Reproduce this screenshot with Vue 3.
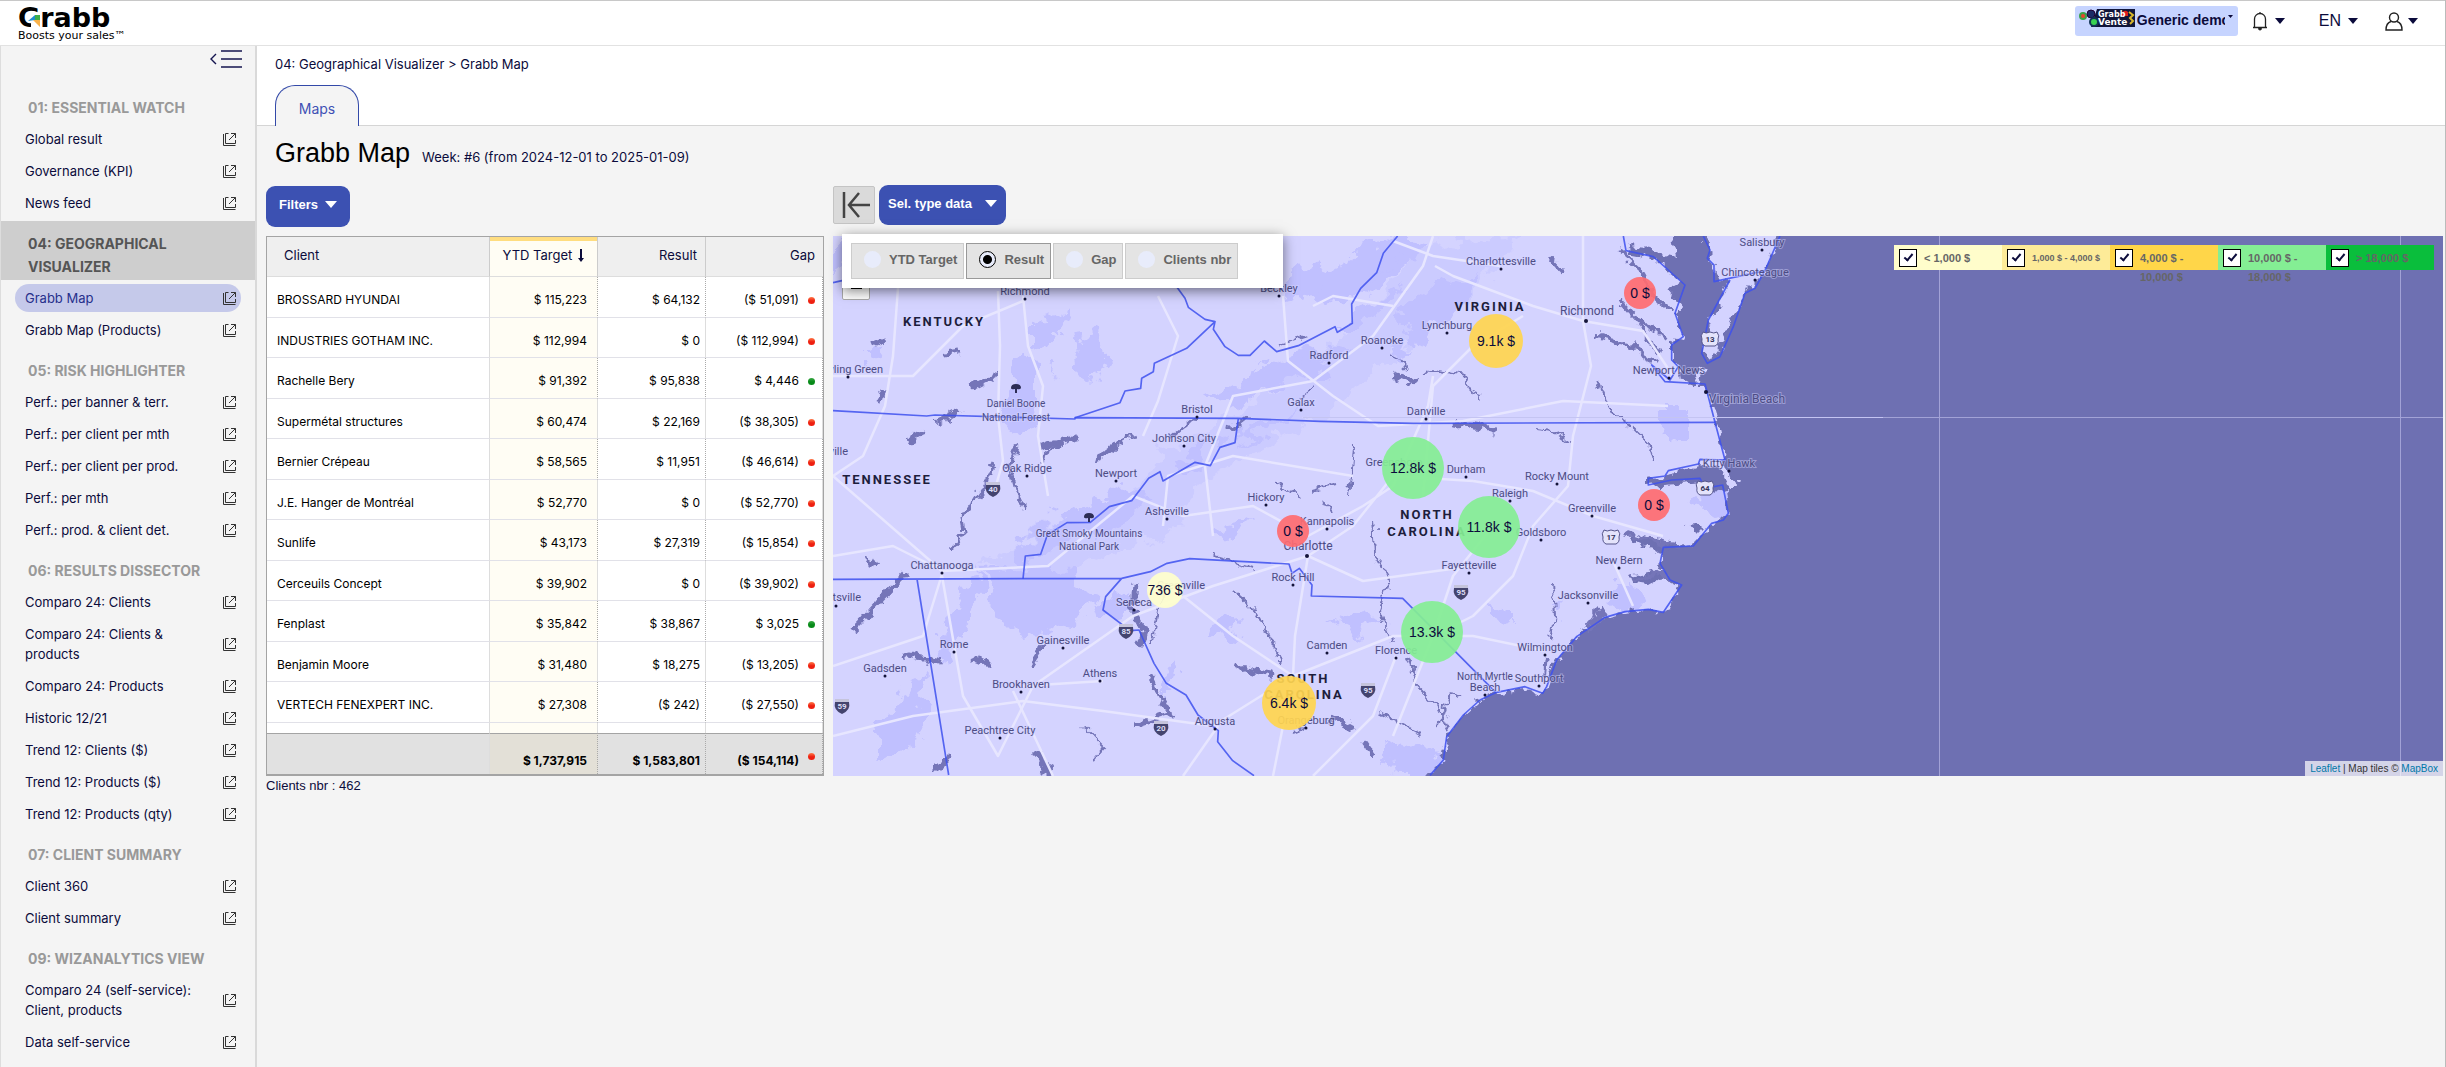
<script setup>
import { ref } from 'vue'

const menu = [
  { title: '01: ESSENTIAL WATCH', items: ['Global result', 'Governance (KPI)', 'News feed'] },
  { title: '04: GEOGRAPHICAL VISUALIZER', open: true, items: ['Grabb Map', 'Grabb Map (Products)'] },
  {
    title: '05: RISK HIGHLIGHTER',
    items: ['Perf.: per banner & terr.', 'Perf.: per client per mth', 'Perf.: per client per prod.', 'Perf.: per mth', 'Perf.: prod. & client det.'],
  },
  {
    title: '06: RESULTS DISSECTOR',
    items: ['Comparo 24: Clients', 'Comparo 24: Clients & products', 'Comparo 24: Products', 'Historic 12/21', 'Trend 12: Clients ($)', 'Trend 12: Products ($)', 'Trend 12: Products (qty)'],
  },
  { title: '07: CLIENT SUMMARY', items: ['Client 360', 'Client summary'] },
  { title: '09: WIZANALYTICS VIEW', items: ['Comparo 24 (self-service): Client, products', 'Data self-service'] },
]
const active = 'Grabb Map'

const rows = [
  ['BROSSARD HYUNDAI', '$ 115,223', '$ 64,132', '($ 51,091)'],
  ['INDUSTRIES GOTHAM INC.', '$ 112,994', '$ 0', '($ 112,994)'],
  ['Rachelle Bery', '$ 91,392', '$ 95,838', '$ 4,446'],
  ['Supermétal structures', '$ 60,474', '$ 22,169', '($ 38,305)'],
  ['Bernier Crépeau', '$ 58,565', '$ 11,951', '($ 46,614)'],
  ['J.E. Hanger de Montréal', '$ 52,770', '$ 0', '($ 52,770)'],
  ['Sunlife', '$ 43,173', '$ 27,319', '($ 15,854)'],
  ['Cerceuils Concept', '$ 39,902', '$ 0', '($ 39,902)'],
  ['Fenplast', '$ 35,842', '$ 38,867', '$ 3,025'],
  ['Benjamin Moore', '$ 31,480', '$ 18,275', '($ 13,205)'],
  ['VERTECH FENEXPERT INC.', '$ 27,308', '($ 242)', '($ 27,550)'],
]

const dataTypes = ['YTD Target', 'Result', 'Gap', 'Clients nbr']
const dataType = ref('Result')

const ranges = ref([
  { label: '< 1,000 $', color: '#fffdcb', on: true },
  { label: '1,000 $ - 4,000 $', color: '#fdeb98', on: true, small: true },
  { label: '4,000 $ - 10,000 $', color: '#ffd649', on: true },
  { label: '10,000 $ - 18,000 $', color: '#84ee94', on: true },
  { label: '> 18,000 $', color: '#0abe3c', on: true },
])

// x, y (centre of the name's baseline), name, park or two-line name without a dot
const towns = [
  [192, 59, 'Richmond'], [183, 171, 'Daniel Boone', 1], [183, 185, 'National Forest', 1],
  [364, 177, 'Bristol'], [351, 206, 'Johnson City'], [468, 170, 'Galax'], [194, 236, 'Oak Ridge'],
  [446, 56, 'Beckley'], [283, 241, 'Newport'], [334, 279, 'Asheville'], [433, 265, 'Hickory'],
  [494, 289, 'Kannapolis'], [256, 301, 'Great Smoky Mountains', 1], [256, 314, 'National Park', 1],
  [109, 333, 'Chattanooga'], [348, 353, 'Greenville'], [301, 370, 'Seneca'], [460, 345, 'Rock Hill'],
  [121, 412, 'Rome'], [230, 408, 'Gainesville'], [52, 436, 'Gadsden'], [267, 441, 'Athens'],
  [188, 452, 'Brookhaven'], [167, 498, 'Peachtree City'], [382, 489, 'Augusta'], [494, 413, 'Camden'],
  [473, 488, 'Orangeburg'], [668, 29, 'Charlottesville'], [929, 10, 'Salisbury'],
  [922, 40, 'Chincoteague'], [614, 93, 'Lynchburg'], [549, 108, 'Roanoke'], [496, 123, 'Radford'],
  [836, 138, 'Newport News'], [593, 179, 'Danville'], [561, 230, 'Greensboro'], [633, 237, 'Durham'],
  [724, 244, 'Rocky Mount'], [677, 261, 'Raleigh'], [759, 276, 'Greenville'], [896, 231, 'Kitty Hawk'],
  [708, 300, 'Goldsboro'], [636, 333, 'Fayetteville'], [786, 328, 'New Bern'], [755, 363, 'Jacksonville'],
  [712, 415, 'Wilmington'], [706, 446, 'Southport'], [652, 444, 'North Myrtle', 1], [652, 455, 'Beach'],
  [563, 418, 'Florence'],
]
const states = [
  [111, 90, 'KENTUCKY'], [54, 248, 'TENNESSEE'], [657, 75, 'VIRGINIA'], [594, 283, 'NORTH'],
  [594, 300, 'CAROLINA'], [470, 447, 'SOUTH'], [471, 463, 'CAROLINA'],
]
const interstates = [
  [160, 253, '40'], [293, 395, '85'], [9, 470, '59'], [328, 492, '20'], [535, 454, '95'], [628, 356, '95'],
]
const highways = [[877, 103, '13'], [872, 252, '64'], [778, 301, '17']]
const bubbles = [
  [663, 105, 27, '#ffd54f', '9.1k $'], [807, 57, 16, '#ff6b70', '0 $'], [580, 232, 31, '#84ee94', '12.8k $'],
  [656, 291, 31, '#84ee94', '11.8k $'], [821, 269, 16, '#ff6b70', '0 $'], [460, 295, 16, '#ff6b70', '0 $'],
  [332, 354, 18, '#ffffcc', '736 $'], [599, 396, 31, '#84ee94', '13.3k $'], [456, 467, 27, '#ffd54f', '6.4k $'],
]
</script>

<template>
  <div class="page">
    <header class="topbar">
      <a class="brand" href="#">
        <span class="brand-name">Grabb</span>
        <svg class="brand-mark" width="14" height="13" viewBox="0 0 14 13" aria-hidden="true">
          <path d="M0 0H14V13H4V8H0z" fill="#fff" />
          <path d="M1 7 8 1v5z" fill="#1f8fd0" />
          <path d="M8 1h5v5l-5 1z" fill="#3fae49" />
          <path d="M6 6h7v7z" fill="#f9b24a" />
        </svg>
        <span class="brand-line">Boosts your sales™</span>
      </a>
      <div class="tools">
        <div class="account">
          <svg width="56" height="18" viewBox="0 0 56 18" aria-hidden="true">
            <path d="M18 0H56V18H12z" fill="#10163a" />
            <circle cx="4" cy="7" r="3" fill="#e8452c" stroke="#3aa24a" stroke-width="2" />
            <circle cx="12" cy="5" r="4" fill="#1c2c66" stroke="#203" />
            <circle cx="15" cy="13" r="4" fill="#39d353" stroke="#135" stroke-width="2" />
            <path d="M41 7q4-8 8-4v4z" fill="#e11d1d" />
            <path d="M50 3l4 3-3 3 3 3-3 3" fill="none" stroke="#d8b72a" stroke-width="2" />
            <text x="19" y="8" class="thumb-a">Grabb</text>
            <text x="19" y="16" class="thumb-b">Vente</text>
          </svg>
          <select aria-label="Account"><option>Generic demo</option></select>
          <svg class="tiny" width="5" height="3" viewBox="0 0 5 3" aria-hidden="true"><path d="M0 0h5L2.500 3z" fill="#0b0b3b" /></svg>
        </div>
        <button class="tool" aria-label="Notifications">
          <svg width="16" height="20" viewBox="0 0 16 20" fill="none" stroke="#222" aria-hidden="true">
            <path d="M1 16.500h14M2.500 16.500V8a5.500 5.500 0 0 1 11 0v8.500M8 2.500V1" stroke-width="1.300" />
            <path d="M6.500 17.500a1.500 1.500 0 0 0 3 0z" fill="#222" />
          </svg>
          <i class="caret"></i>
        </button>
        <button class="tool lang">EN<i class="caret"></i></button>
        <button class="tool" aria-label="Profile">
          <svg width="18" height="19" viewBox="0 0 18 19" fill="none" stroke="#222" stroke-width="1.400" aria-hidden="true">
            <circle cx="9" cy="5.500" r="4.500" />
            <path d="M6 9.500Q1 11 1 18h16q0-7-5-8.500" />
          </svg>
          <i class="caret"></i>
        </button>
      </div>
    </header>

    <div class="body">
      <nav class="side">
        <button class="fold" aria-label="Collapse menu">
          <svg width="32" height="18" viewBox="0 0 32 18" fill="none" stroke="#14144f" stroke-width="1.400" aria-hidden="true">
            <path d="M6 4 1 9l5 5M11 1h21M11 9h21M11 17h21" />
          </svg>
        </button>
        <section v-for="g in menu" :key="g.title">
          <h2 :class="{ open: g.open }">{{ g.title }}</h2>
          <a v-for="i in g.items" :key="i" href="#" :class="{ on: i === active }">
            <span>{{ i }}</span>
            <svg width="13" height="13" viewBox="0 0 13 13" fill="none" stroke="#333" aria-hidden="true">
              <path d="M.500 1v11.500H12.500M5.500.500h-3v10h10V7M8 .500h4.500V5M12.500.500 6 7" />
            </svg>
          </a>
        </section>
      </nav>

      <main>
        <div class="crumbs">
          <p>04: Geographical Visualizer &gt; Grabb Map</p>
          <a class="tab" href="#">Maps</a>
        </div>
        <div class="title">
          <h1>Grabb Map</h1>
          <span>Week: #6 (from 2024-12-01 to 2025-01-09)</span>
        </div>
        <div class="panels">
          <div class="left">
            <div class="bar"><button class="primary">Filters<i class="caret"></i></button></div>
            <table>
              <colgroup><col class="c1" /><col class="c2" /><col class="c2" /><col /></colgroup>
              <thead>
                <tr>
                  <th>Client</th>
                  <th class="sorted">YTD Target
                    <svg width="6" height="13" viewBox="0 0 6 13" aria-hidden="true"><path d="M2 0h2v9h2l-3 4-3-4h2z" fill="#0b0b3b" /></svg>
                  </th>
                  <th>Result</th>
                  <th>Gap</th>
                </tr>
              </thead>
              <tbody>
                <tr v-for="r in rows" :key="r[0]">
                  <td>{{ r[0] }}</td>
                  <td>{{ r[1] }}</td>
                  <td>{{ r[2] }}</td>
                  <td>{{ r[3] }}<i class="dot" :class="{ up: r[3][0] === '$' }"></i></td>
                </tr>
                <tr class="rest"><td></td><td></td><td></td><td></td></tr>
              </tbody>
              <tfoot>
                <tr><td></td><td>$ 1,737,915</td><td>$ 1,583,801</td><td>($ 154,114)<i class="dot"></i></td></tr>
              </tfoot>
            </table>
            <p class="count">Clients nbr : 462</p>
          </div>

          <div class="right">
            <div class="bar">
              <button class="shrink" aria-label="Hide table">
                <svg width="28" height="26" viewBox="0 0 28 26" fill="none" stroke="#444" stroke-width="2.500" aria-hidden="true">
                  <path d="M2 0v26M28 13H7M17 1 7 13l10 12" />
                </svg>
              </button>
              <button class="primary wide">Sel. type data<i class="caret"></i></button>
              <div class="popup">
                <label v-for="d in dataTypes" :key="d" :class="{ on: d === dataType }">
                  <input v-model="dataType" type="radio" name="type" :value="d" />{{ d }}
                </label>
              </div>
            </div>
            <div class="map">
              <svg class="canvas" width="2400" height="540" viewBox="0 0 2400 540" role="img" aria-label="Map">
                <defs>
                  <filter id="rough" x="-40" y="-40" width="2480" height="640" filterUnits="userSpaceOnUse">
                    <feTurbulence type="fractalNoise" baseFrequency=".09" numOctaves="3" seed="4" />
                    <feDisplacementMap in="SourceGraphic" scale="14" xChannelSelector="R" yChannelSelector="G" />
                  </filter>
                  <filter id="rougher" x="-40" y="-40" width="2480" height="640" filterUnits="userSpaceOnUse">
                    <feTurbulence type="fractalNoise" baseFrequency=".05" numOctaves="4" seed="9" />
                    <feDisplacementMap in="SourceGraphic" scale="34" xChannelSelector="R" yChannelSelector="G" />
                  </filter>
                </defs>
                <rect width="2400" height="540" fill="#d4d3ff" />

                <!-- woodland -->
                <g filter="url(#rougher)" fill="#bcbcff" opacity=".8">
                  <path opacity=".45" d="M150 330 210 290 290 265 330 215 400 180 470 130 540 70 590 10 690 0 640 60 560 120 480 185 420 215 370 250 330 300 270 320 210 345z" />
                  <path d="M180 310 230 280 285 250 315 265 290 290 240 300 190 330z" />
                  <path d="M150 335 240 330 265 365 245 385 190 400 160 370zM372 160 440 130 480 110 520 115 460 140 400 170zM560 80 600 50 650 40 620 80 580 110zM470 55 505 30 560 0 600 5 560 40 500 70z" />
                  <path d="M200 85 235 75 225 100 200 105zM240 100 270 95 275 130 250 145zM175 150 190 120 205 130 205 175 185 200 165 175zM35 105 55 110 50 130 35 125z" />
                  <path d="M75 450 95 440 85 500 45 530 45 500zM325 440 345 430 340 455 325 455zM375 385 410 380 400 405 370 400zM495 385 525 375 550 385 520 400 500 395z" />
                  <path d="M555 510 590 505 610 525 600 540 560 540zM655 365 680 370 680 385 655 380zM780 345 800 345 810 370 790 375 775 365zM715 365 735 370 725 380zM830 170 850 170 850 205 835 205zM0 0 20 5 15 30 0 40zM450 40 490 30 480 60 455 65z" />
                  <path d="M105 395 125 360 150 330 130 400 110 430zM265 370 290 350 300 375 270 385zM420 285 400 305 380 295zM465 130 500 125 490 150 470 150zM860 255 900 250 910 280 880 285z" />
                  <path d="M392 150 430 125 425 135 395 158zM400 205 440 185 470 175 430 200zM505 90 560 55 575 50 530 90zM520 55 560 25 570 25 535 60zM345 225 395 195 385 210 350 240zM215 130 222 128 220 140zM560 118 575 112 570 125z" />
                </g>

                <!-- ocean, bays, rivers -->
                <g filter="url(#rough)" fill="#6e6fb2" stroke="none">
                  <path d="M839 -20 839 0 844 22 835 20 815 12 796 10 793 17 820 22 850 48 836 55 848 70 842 80 850 100 838 108 838 125 850 132 846 142 860 150 873 150 876 160 884 188 893 228 902 252 895 252 885 230 868 228 840 238 815 243 815 250 845 248 870 246 884 256 893 252 896 280 889 285 878 290 860 308 830 312 827 328 836 344 848 350 830 378 815 374 792 376 770 382 742 402 722 426 713 452 706 458 690 452 663 458 645 466 630 480 614 500 608 526 596 540 580 580 2430 580V-20z" />
                  <path d="M796 300 818 302 850 310 832 318 812 312zM798 340 824 334 832 340 815 350 800 348zM855 290 872 288 862 298z" />
                </g>
                <g filter="url(#rough)" fill="#d4d3ff">
                  <path d="M879 -20 872 8 882 16 874 24 881 32 884 46 896 44 884 72 873 98 872 120 876 126 886 112 899 84 914 54 932 36 944 0 944 -20z" />
                  <path d="M902 244h8l-3 5zM868 130l4 0-8 20-5 0z" />
                </g>
                <g filter="url(#rough)" fill="none" stroke="#7475b8" stroke-width="3">
                  <path d="M120 312l10-14-2-16 14-20 12-18 6-14M184 210l-8 20 6 25 8 18M206 225l18-14 12-8M275 215l28-17M340 200l22-18M395 195l20-15" />
                  <path stroke-width="6" d="M205 212l40-10M262 224l20-14M137 152l28-14M105 186l24-12M72 206l18-10M560 138l22 8M620 186l26 4 18 6" />
                  <path stroke-width="5" d="M20 395l30-34 22-24M70 418l38 8M198 430l14-22M143 422l14 6M32 322l12 6M38 110l14-6M110 118l16-2M50 152l-4 14M302 346l-2 28 12 22-4 14M316 440l22 38-36 12M405 432l34 6" />
                  <path stroke-width="7" d="M495 480l26 14M530 504l10 14M770 376l-18 20M205 518l14 26M100 538l16-16" />
                  <path stroke-width="4" d="M765 100l30 8 18 14 12 6M800 80l18 10 14 14M784 12l22 20 16 30 18 14M785 62l20 22 22 34M715 18l14 16M792 296l30 10 24 4M800 345l26-10 14 10M755 395l8-20M712 440l2-18" />
                  <path stroke-width="2" d="M700 192l20 2 20 14M560 120l14 12M592 135l40 6 16 24M765 145l12 30 20 16M820 225l-6-20-14-14M575 420l10 30 18 18 12 26M606 492l10-30 14-6M540 280l2 40 14 24-10 30 12 30M720 350l2 30-6 26M548 476l40 22M480 255l24-6M400 355l22 20 18 34 10 20M330 350l-12 60M380 320l40 12M490 265l8 12M250 490l20 20-12 14M425 30l8 26M445 108l30-10M468 160l10-8M440 245l30 20M520 210l-4 50M470 490l-10 4" />
                </g>

                <!-- roads -->
                <g fill="none" stroke="#e7e6ff" stroke-width="2.500" stroke-linejoin="round">
                  <path d="M65 52 60 120 52 170 30 220 0 240M165 55 167 110 165 180 170 225 160 260M190 60 195 110 210 150 205 200 215 260M0 140 80 140 130 90 190 65M325 60 345 100 325 165 310 200" />
                  <path d="M450 60 455 125 500 160 545 190 630 185 730 165 835 170M600 0 590 30 540 100 480 145 400 160 372 230 380 300" />
                  <path d="M602 30 620 40 700 70 750 85 810 95 840 140M750 0 750 85 758 130 740 200 735 250 700 290 680 340 640 380 600 400" />
                  <path d="M600 140 595 170 560 250 530 270 475 300 420 270 350 280 300 260 215 330 109 335 0 240M690 80 640 110 600 150 590 260M640 245 560 240 520 290 475 320 380 350 300 380 200 450 165 520 130 460 109 340" />
                  <path d="M475 320 462 400 460 440 440 540M350 360 400 400 460 440 560 400 640 400 712 415M0 500 80 480 190 465 270 475 380 490 460 440M270 445 190 450M180 455 220 540M563 420 540 480 480 540M385 490 350 540M660 290 620 340 600 400 560 500" />
                  <path d="M0 320 60 310 110 335 90 400 0 430M330 290 335 240 400 220 520 240M640 245 700 255 760 280 830 300M780 325 800 370M475 320 530 345 640 330M667 30 600 20 560 5M480 70 500 60 560 70" />
                </g>

                <!-- state limits -->
                <g fill="none" stroke="#3d50ee" stroke-width="5" stroke-opacity=".85" stroke-linejoin="round">
                  <g transform="translate(-13 -66) scale(.333333)">
                    <path d="M1070 350 1095 385 1105 412 1155 448 1185 455 1100 535 1003 580 1000 605 965 625 962 655 915 663 900 698 765 743M1185 455 1180 478 1215 530 1255 556 1290 556 1333 513 1370 545 1435 527 1545 470 1552 487 1597 460 1595 402 1622 355 1670 308 1690 250 1733 198" />
                    <path d="M39 338 66 332M39 722 320 738 345 735 765 747V743L1255 745 1500 754 1780 760 2685 757M1255 745 1245 818 1200 832 1171 887 1125 877 1029 933 1020 905 986 925 935 992 868 1010 811 1057 741 1058 682 1095 662 1153 616 1158 609 1227" />
                    <path d="M39 1228 905 1225 991 1205 1041 1180 1109 1166 1407 1182 1416 1210 1438 1195 1476 1245 1474 1278 1748 1285 2028 1568M905 1225 857 1280 849 1320 930 1382 957 1380 1002 1480 1039 1540 1098 1575 1134 1635 1195 1682 1193 1715 1238 1772 1302 1817M291 1227 386 1815" />
                  </g>
                  <g transform="translate(467 -6) scale(.333333)">
                    <path d="M970 18 978 62 1060 80 1155 165 1125 250 1150 320 1115 345V390L1135 410 1110 450 1055 405 1095 455 1215 462 1245 577 1275 690 1200 688 1195 702 1105 722 1095 738 1045 745V765L1115 750 1200 745 1215 775 1268 765 1285 850 1270 870 1235 880 1180 948 1090 952 1080 1000 1110 1050 1145 1065 1090 1147 1045 1138 975 1145 915 1162 830 1220 770 1290 740 1370 728 1390 675 1370 590 1387 540 1410 490 1455 440 1520 430 1590 390 1636" />
                    <path d="M1210 18 1230 60 1222 85 1242 105V155L1395 122 1440 18M1395 122 1365 175 1335 190 1300 290 1260 380 1222 400 1205 370 1225 270 1290 150" />
                  </g>
                </g>

                <!-- tile seams -->
                <path d="M1106.500 0v540M1567.500 0v540M1050 181.500h1400" stroke="#a2a2d6" fill="none" />
                <path d="M470 181.500h580" stroke="#c4c4f2" fill="none" />

                <g class="names">
                  <template v-for="t in towns" :key="t[0] + t[2]">
                    <text :x="t[0]" :y="t[1]" :class="{ fine: t[3] }">{{ t[2] }}</text>
                    <circle v-if="!t[3]" :cx="t[0]" :cy="t[1] + 4" r="1.500" />
                  </template>
                  <text x="50" y="137" class="end">Bowling Green</text>
                  <circle cx="15" cy="141" r="1.500" />
                  <text x="15" y="219" class="end">Nashville</text>
                  <text x="28" y="365" class="end">Huntsville</text>
                  <circle cx="3" cy="370" r="1.500" />
                  <g class="big">
                    <text x="754" y="79">Richmond</text><circle cx="753" cy="85" r="2" />
                    <text x="475" y="314">Charlotte</text><circle cx="474" cy="320" r="2" />
                    <text x="914" y="167">Virginia Beach</text><circle cx="873" cy="156" r="2" />
                  </g>
                </g>
                <g class="states"><text v-for="s in states" :key="s[2] + s[1]" :x="s[0]" :y="s[1]">{{ s[2] }}</text></g>
                <g fill="#2c2c55">
                  <path d="M178 152q0-4 5-4t5 4q-1 2-4 1v4h-2v-4q-4 1-4-1zM251 281q0-4 5-4t5 4q-1 2-4 1v4h-2v-4q-4 1-4-1z" />
                </g>
                <g v-for="s in interstates" :key="s[0]" :transform="`translate(${s[0]} ${s[1]})`" class="shield">
                  <path d="M-7-7 7-7 7-4-7-4z" fill="#c5c4dc" />
                  <path d="M-7-4H7Q9 4 0 8-9 4-7-4z" fill="#44446e" />
                  <text y="3">{{ s[2] }}</text>
                </g>
                <g v-for="s in highways" :key="s[0]" :transform="`translate(${s[0]} ${s[1]})`" class="shield us">
                  <path d="M-7-7Q-4-5 0-7 4-5 7-7 10-3 8 0 9 5 5 7H-5Q-9 5-8 0-10-3-7-7z" fill="#e4e3fb" stroke="#55558a" />
                  <text y="3">{{ s[2] }}</text>
                </g>
                <g v-for="b in bubbles" :key="b[0]" class="bubble">
                  <circle :cx="b[0]" :cy="b[1]" :r="b[2]" :fill="b[3]" />
                  <text :x="b[0]" :y="b[1] + 5">{{ b[4] }}</text>
                </g>
              </svg>
              <button class="zoom" aria-label="Zoom out"></button>
              <div class="legend">
                <label v-for="r in ranges" :key="r.label" :class="{ small: r.small }" :style="{ background: r.color }">
                  <input v-model="r.on" type="checkbox" /><span>{{ r.label }}</span>
                </label>
              </div>
              <p class="credit"><a href="#">Leaflet</a> | Map tiles © <a href="#">MapBox</a></p>
            </div>
          </div>
        </div>
      </main>
    </div>
  </div>
</template>

<style>
body { margin: 0; background: #f4f4f4; }
</style>

<style scoped>
.page { min-height: 100vh; display: flex; flex-direction: column; font-family: Inter, "Liberation Sans", sans-serif; font-size: 13px; line-height: 20px; color: #0b0b3b; background: #f4f4f4; border-right: 1px solid #bbb; box-sizing: border-box; }
.page *, .page *::before { box-sizing: border-box; }
h1, h2, p { margin: 0; }
a { color: inherit; text-decoration: none; }
button { font: inherit; color: inherit; background: none; border: 0; padding: 0; }
.caret { border: 5px solid transparent; border-top: 6px solid currentColor; border-bottom: 0; }

.topbar { height: 46px; padding: 0 27px 0 18px; display: flex; justify-content: space-between; background: #fff; border-top: 1px solid #c8c8c8; border-bottom: 1px solid #e2e2e2; }
.brand { position: relative; display: flex; flex-direction: column; font-family: "DejaVu Sans", sans-serif; color: #000; padding-top: 4px; }
.brand-name { font-size: 27px; line-height: 26px; font-weight: 700; }
.brand-mark { position: absolute; left: 9px; top: 13px; }
.brand-line { font-size: 11px; line-height: 10px; }
.tools { display: flex; align-items: flex-start; padding-top: 5px; }
.account { position: relative; display: flex; align-items: flex-start; width: 163px; height: 30px; padding: 3px 4px; background: #c6d4ff; border-radius: 3px; margin-right: 14px; }
.account select { appearance: none; border: 0; background: none; width: 88px; margin-left: 2px; padding: 0; height: 22px; font: 700 14px "Liberation Sans", sans-serif; color: #0b0b3b; }
.thumb-a { font: 700 8px "DejaVu Sans", sans-serif; fill: #fff; }
.thumb-b { font: 700 9px "DejaVu Sans", sans-serif; fill: #fff; }
.tiny { margin: 6px 0 0 3px; }
.tool { display: flex; align-items: center; gap: 7px; height: 30px; margin-right: 34px; }
.tool:last-child { margin-right: 0; gap: 5px; }
.lang { font: 16px "Liberation Sans", sans-serif; margin-right: 27px; }

.body { flex: 1; display: flex; }
.side { flex: 0 0 257px; border-left: 1px solid #ddd; border-right: 2px solid #d9d9d9; }
.fold { display: block; margin: 4px 13px 17px auto; height: 18px; }
.side h2 { margin: 0; padding: 11px 40px 2px 27px; font-size: 14px; line-height: 23px; font-weight: 700; color: #999; }
.side h2.open { background: #cecece; color: #555; }
.side a { display: flex; align-items: center; justify-content: space-between; margin: 4px 14px; padding: 4px 5px 4px 10px; border-radius: 14px; }
.side a span { max-width: 170px; }
.side a.on { background: #c5c9ea; color: #27308c; }
.side section { display: flow-root; }

main { flex: 1; min-width: 0; }
.crumbs { height: 80px; padding: 8px 18px 0; background: #fff; border-bottom: 1px solid #d5d5d5; }
.tab { display: block; width: 84px; height: 41px; margin-top: 11px; border: 1px solid #3349a8; border-bottom: 0; border-radius: 20px 20px 0 0; background: #f4f4f4; color: #3f51b5; font-size: 14px; line-height: 45px; text-align: center; }
.title { display: flex; align-items: baseline; gap: 12px; height: 60px; padding: 11px 18px 0; }
h1 { font: 400 27px/32px "Liberation Sans", sans-serif; color: #000; }
.panels { display: flex; gap: 9px; padding: 0 2px 0 9px; }
.left { flex: 0 0 558px; }
.right { flex: 1; min-width: 0; }
.bar { position: relative; display: flex; align-items: flex-start; gap: 4px; height: 50px; }
.primary { display: flex; justify-content: center; gap: 7px; width: 84px; height: 41px; padding-top: 9px; border-radius: 9px; background: #3c51b2; color: #fff; font: 700 13px/20px "Liberation Sans", sans-serif; }
.primary.wide { width: 127px; height: 40px; margin-top: -1px; gap: 13px; }
.primary .caret { border-width: 7px 6px 0; margin-top: 6px; }
.shrink { display: flex; align-items: center; width: 42px; height: 38px; padding-left: 8px; background: #dadada; border: 1px solid #c4c4c4; border-radius: 2px; }
.popup { position: absolute; z-index: 2; left: 9px; top: 48px; display: flex; gap: 2px; width: 441px; height: 54px; padding: 9px; background: #fff; box-shadow: 0 3px 12px rgba(0, 0, 0, .5); }
.popup label { display: flex; gap: 8px; height: 36px; padding: 6px 6px 0 12px; background: #e4e4e4; border: 1px solid #ccc; color: #666; font: 700 13px/20px "Liberation Sans", sans-serif; white-space: nowrap; }
.popup label.on { border-color: #999; }
.popup input { appearance: none; width: 17px; height: 17px; margin: 1px 0 0; border-radius: 50%; background: #e8ecfb; }
.popup input:checked { border: 1px solid #000; background: radial-gradient(circle, #000 4px, #e8ecfb 5px); }

table { width: 100%; table-layout: fixed; border-collapse: separate; border-spacing: 0; border: 1px solid #a4a4a4; border-bottom-width: 2px; background: #fff; }
.c1 { width: 223px; }
.c2 { width: 108px; }
th { height: 40px; padding: 0 8px 4px; font-weight: 400; font-size: 13px; text-align: right; background: #efefef; border-right: 1px solid #ccc; border-bottom: 1px solid #ddd; white-space: nowrap; }
th:first-child { text-align: left; padding-left: 17px; }
th:last-child { border-right: 0; }
th.sorted { padding-right: 13px; background: #fffdf4; box-shadow: inset 0 4px #ffdd80; }
th svg { vertical-align: -2px; margin-left: 2px; }
td { position: relative; height: 40px; padding: 6px 5px 0 0; font-size: 12px; color: #000; text-align: right; border-right: 1px dotted #aaa; border-bottom: 1px solid #e1e1e8; white-space: nowrap; }
tr:nth-child(odd) td { height: 41px; }
tbody tr:nth-child(even) td:nth-child(n + 2) { border-right-style: solid; border-right-color: #ddd; }
td:first-child { padding-left: 10px; text-align: left; border-right: 1px solid #ddd; }
td:nth-child(2) { padding-right: 10px; background: #fffdf4; }
td:last-child { padding-right: 23px; }
.dot { position: absolute; right: 7px; top: 20px; width: 7px; height: 7px; border-radius: 50%; background: linear-gradient(#ff7a4a, #ee1f10 55%); }
.dot.up { background: linear-gradient(#3aa845, #078a18 55%); }
tbody .rest td { height: 10px; padding: 0; border-bottom: 0; }
tfoot tr:nth-child(odd) td { height: 41px; padding-top: 14px; background: #e1e1e1; font-weight: 700; border-top: 1px solid #a4a4a4; border-bottom: 0; }
tfoot tr:nth-child(odd) td:nth-child(2) { background: #e3e0d7; }
tfoot .dot { top: 19px; }
.count { font-family: "Liberation Sans", sans-serif; }

.map { position: relative; height: 540px; overflow: hidden; background: #6e6fb2; }
.canvas { display: block; }
.names text { font: 11px Roboto, sans-serif; text-anchor: middle; fill: #4c4c84; paint-order: stroke; stroke: rgba(214, 213, 255, .45); stroke-width: 2px; }
.names text.fine { font-size: 10px; }
.names text.end { text-anchor: end; }
.names circle { fill: #14143a; }
.names .big text { font-size: 12px; }
.states text { font: 700 13px Roboto, sans-serif; letter-spacing: 2px; text-anchor: middle; fill: #1d1d3c; }
.shield text { font: 700 8px Roboto, sans-serif; text-anchor: middle; fill: #dcdcf5; }
.shield.us text { fill: #33335c; }
.bubble circle { fill-opacity: .92; }
.bubble text { font: 14px "Liberation Sans", sans-serif; text-anchor: middle; fill: #0b0b3b; }
.zoom { position: absolute; left: 9px; top: 36px; width: 28px; height: 28px; background: #fff; border: 1px solid #aaa; border-radius: 2px; }
.zoom::before { content: ""; display: block; width: 11px; height: 3px; margin: 3px auto 0; background: #000; }
.legend { position: absolute; top: 9px; right: 9px; display: flex; }
.legend label { display: flex; gap: 7px; width: 108px; height: 25px; padding: 4px 0 0 5px; font: 700 11px/19px "Liberation Sans", sans-serif; color: #666; }
.legend label.small { font-size: 9px; }
.legend label span { flex: 1; }
.legend input { appearance: none; flex: none; width: 18px; height: 18px; margin: 0; border: 1px solid #000; background: #fff; }
.legend input:checked::before { content: ""; display: block; width: 5px; height: 9px; margin: 2px 0 0 6px; border: solid #0b0b3b; border-width: 0 2px 2px 0; transform: rotate(40deg); }
.credit { position: absolute; right: 0; bottom: 0; padding: 0 5px; background: rgba(255, 255, 255, .7); font: 10px/15px "Liberation Sans", sans-serif; color: #333; }
.credit a { color: #0078a8; }
</style>
